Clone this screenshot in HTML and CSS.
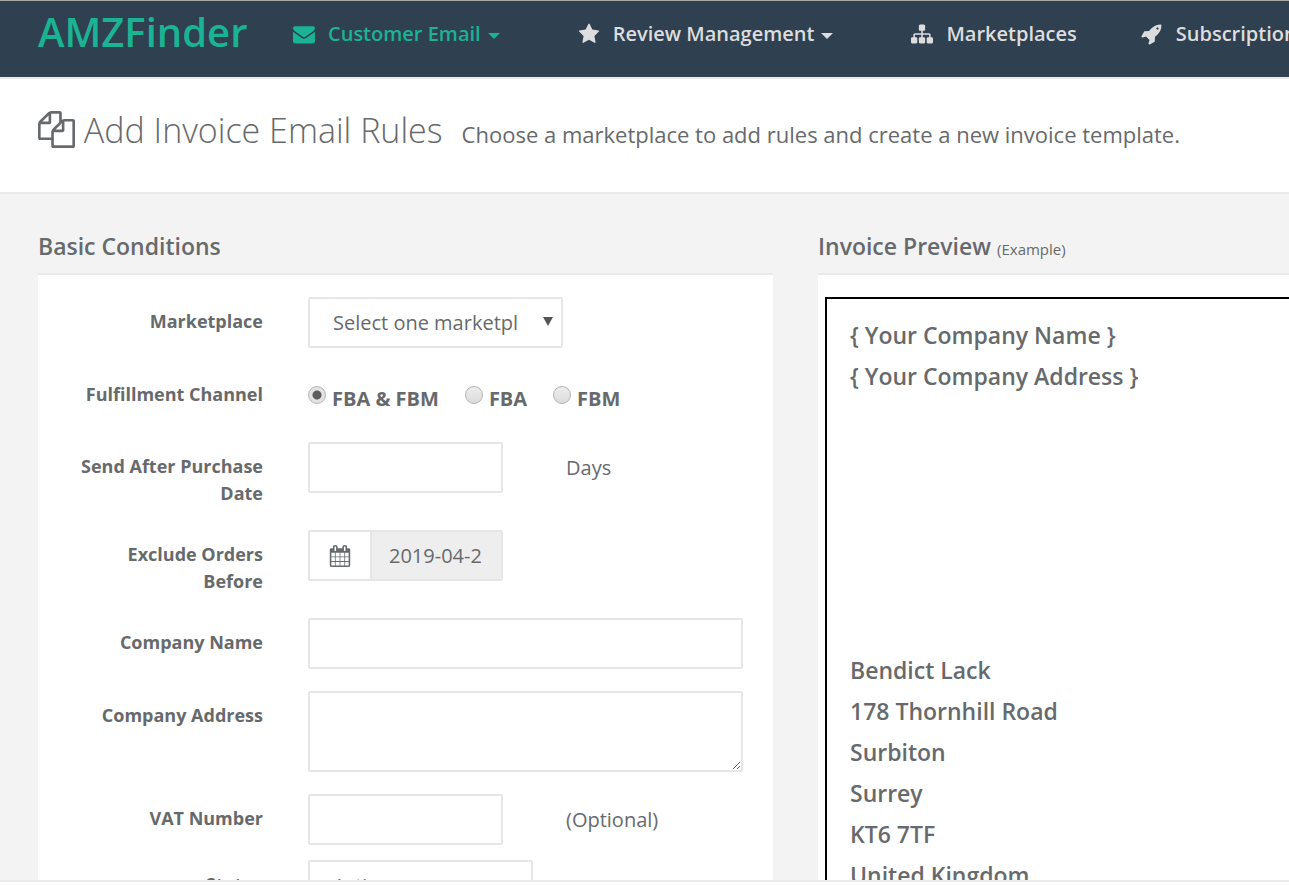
FILE: index.html
```html
<!DOCTYPE html>
<html lang="en">
<head>
    <meta charset="UTF-8">
    <meta name="viewport" content="width=device-width, initial-scale=1.0">
    <title>AMZFinder - Add Invoice Email Rules</title>
    <link rel="stylesheet" href="styles.css">
</head>
<body>

<nav class="navbar">
    <a class="brand" href="#">AMZFinder</a>
    <ul class="nav-menu">
        <li class="active">
            <a href="#">
                <svg class="nav-icon" viewBox="0 0 1792 1792"><path d="M1792 710v794q0 66-47 113t-113 47h-1472q-66 0-113-47t-47-113v-794q44 49 101 87 362 246 497 345 57 42 92.500 65.500t94.500 48 110 24.500h2q51 0 110-24.500t94.500-48 92.500-65.500q170-123 498-345 57-39 100-87zm0-294q0 79-49 151t-122 123q-376 261-468 325-10 7-42.500 30.500t-54 38-52 32.500-57.500 27-50 9h-2q-23 0-50-9t-57.500-27-52-32.500-54-38-42.500-30.500q-91-64-262-182.500t-205-142.500q-62-42-117-115.500t-55-136.500q0-78 41.500-130t118.500-52h1472q65 0 112.500 47t47.500 113z"/></svg>
                <span>Customer Email</span>
                <b class="caret"></b>
            </a>
        </li>
        <li>
            <a href="#">
                <svg class="nav-icon" viewBox="0 0 1792 1792"><path d="M1728 647q0 22-26 48l-363 354 86 500q1 7 1 20 0 21-10.500 35.500t-30.500 14.500q-19 0-40-12l-449-236-449 236q-22 12-40 12-21 0-31.500-14.500t-10.500-35.500q0-6 2-20l86-500-364-354q-25-27-25-48 0-37 56-46l502-73 225-455q19-41 49-41t49 41l225 455 502 73q56 9 56 46z"/></svg>
                <span>Review Management</span>
                <b class="caret"></b>
            </a>
        </li>
        <li>
            <a href="#">
                <svg class="nav-icon" viewBox="0 0 1792 1792"><path d="M1792 1248v320q0 40-28 68t-68 28h-320q-40 0-68-28t-28-68v-320q0-40 28-68t68-28h96v-192h-512v192h96q40 0 68 28t28 68v320q0 40-28 68t-68 28h-320q-40 0-68-28t-28-68v-320q0-40 28-68t68-28h96v-192h-512v192h96q40 0 68 28t28 68v320q0 40-28 68t-68 28h-320q-40 0-68-28t-28-68v-320q0-40 28-68t68-28h96v-192q0-52 38-90t90-38h512v-192h-96q-40 0-68-28t-28-68v-320q0-40 28-68t68-28h320q40 0 68 28t28 68v320q0 40-28 68t-68 28h-96v192h512q52 0 90 38t38 90v192h96q40 0 68 28t28 68z"/></svg>
                <span>Marketplaces</span>
            </a>
        </li>
        <li>
            <a href="#">
                <svg class="nav-icon" viewBox="0 0 1792 1792"><path d="M1440 448q0-40-28-68t-68-28-68 28-28 68 28 68 68 28 68-28 28-68zm224-288q0 249-75.500 430.500t-253.500 360.500q-81 80-195 176l-20 379q-2 16-16 26l-384 224q-7 4-16 4-12 0-23-9l-64-64q-13-14-8-32l85-276-281-281-276 85q-3 1-9 1-14 0-23-9l-64-64q-17-19-5-39l224-384q10-14 26-16l379-20q96-114 176-195 188-187 358-258t431-71q14 0 24 9.500t10 22.500z"/></svg>
                <span>Subscription</span>
            </a>
        </li>
    </ul>
</nav>

<header class="page-heading">
    <h2>
        <svg class="heading-icon" viewBox="0 0 1792 1792"><path d="M1696 384q40 0 68 28t28 68v1216q0 40-28 68t-68 28h-960q-40 0-68-28t-28-68v-288h-544q-40 0-68-28t-28-68v-672q0-40 20-88t48-76l408-408q28-28 76-48t88-20h416q40 0 68 28t28 68v328q68-40 128-40h416zm-544 213l-299 299h299v-299zm-640-384l-299 299h299v-299zm196 647l316-316v-416h-384v416q0 40-28 68t-68 28h-416v640h512v-256q0-40 20-88t48-76zm956 804v-1152h-384v416q0 40-28 68t-68 28h-416v640h896z"/></svg>
        Add Invoice Email Rules
    </h2>
    <p>Choose a marketplace to add rules and create a new invoice template.</p>
</header>

<main class="content">
    <section class="panel panel-form">
        <h5>Basic Conditions</h5>
        <form class="panel-body">
            <div class="form-row">
                <label class="row-label" for="marketplace">Marketplace</label>
                <div class="select-wrap">
                    <select id="marketplace" class="form-control">
                        <option>Select one marketplace</option>
                    </select>
                </div>
            </div>

            <div class="form-row row-radio" role="radiogroup" aria-labelledby="channel">
                <span class="row-label" id="channel">Fulfillment Channel</span>
                <div class="radios">
                    <label><input type="radio" name="channel" checked>FBA &amp; FBM</label>
                    <label><input type="radio" name="channel">FBA</label>
                    <label><input type="radio" name="channel">FBM</label>
                </div>
            </div>

            <div class="form-row row-tall">
                <label class="row-label" for="days">Send After Purchase Date</label>
                <input id="days" class="form-control short" type="text">
                <span class="hint">Days</span>
            </div>

            <div class="form-row row-tall">
                <label class="row-label" for="before">Exclude Orders Before</label>
                <div class="date-group short">
                    <span class="addon">
                        <svg viewBox="0 0 1792 1792"><path d="M192 1664h288v-288h-288v288zm352 0h320v-288h-320v288zm-352-352h288v-320h-288v320zm352 0h320v-320h-320v320zm-352-384h288v-288h-288v288zm736 736h320v-288h-320v288zm-384-736h320v-288h-320v288zm768 736h288v-288h-288v288zm-384-352h320v-320h-320v320zm-352-864v-288q0-13-9.500-22.500t-22.500-9.500h-64q-13 0-22.500 9.500t-9.500 22.500v288q0 13 9.500 22.500t22.500 9.500h64q13 0 22.500-9.500t9.500-22.500zm736 864h288v-320h-288v320zm-384-384h320v-288h-320v288zm384 0h288v-288h-288v288zm32-480v-288q0-13-9.500-22.500t-22.500-9.500h-64q-13 0-22.500 9.500t-9.500 22.500v288q0 13 9.500 22.500t22.500 9.500h64q13 0 22.500-9.500t9.500-22.500zm384-64v1280q0 52-38 90t-90 38h-1408q-52 0-90-38t-38-90v-1280q0-52 38-90t90-38h128v-96q0-66 47-113t113-47h64q66 0 113 47t47 113v96h384v-96q0-66 47-113t113-47h64q66 0 113 47t47 113v96h128q52 0 90 38t38 90z"/></svg>
                    </span>
                    <input id="before" class="form-control" type="text" value="2019-04-25" readonly>
                </div>
            </div>

            <div class="form-row">
                <label class="row-label" for="company">Company Name</label>
                <input id="company" class="form-control full" type="text">
            </div>

            <div class="form-row">
                <label class="row-label" for="address">Company Address</label>
                <textarea id="address" class="form-control full"></textarea>
            </div>

            <div class="form-row row-tight">
                <label class="row-label" for="vat">VAT Number</label>
                <input id="vat" class="form-control short" type="text">
                <span class="hint">(Optional)</span>
            </div>

            <div class="form-row">
                <label class="row-label" for="status">Status</label>
                <select id="status" class="form-control status">
                    <option>Active</option>
                </select>
            </div>
        </form>
    </section>

    <section class="panel panel-preview">
        <h5>Invoice Preview <small>(Example)</small></h5>
        <div class="panel-body">
            <div class="invoice">
                <div class="company">
                    <p>{ Your Company Name }</p>
                    <p>{ Your Company Address }</p>
                </div>
                <address>
                    <p>Bendict Lack</p>
                    <p>178 Thornhill Road</p>
                    <p>Surbiton</p>
                    <p>Surrey</p>
                    <p>KT6 7TF</p>
                    <p>United Kingdom</p>
                </address>
            </div>
        </div>
    </section>
</main>

<footer class="footer"></footer>

</body>
</html>
```

FILE: styles.css
```css
* {
    box-sizing: border-box;
}

body {
    margin: 0;
    height: 100vh;
    display: flex;
    flex-direction: column;
    overflow: hidden;
    background-color: #f3f3f4;
    color: #676a6c;
    font-family: "Open Sans", "Noto Sans", sans-serif;
    font-size: 20px;
}

h2, h5, p, ul {
    margin: 0;
    padding: 0;
}

svg {
    fill: currentColor;
}

/* top bar */
.navbar {
    flex: none;
    display: flex;
    height: 79px;
    padding-left: 38px;
    background-color: #2f4050;
    border-top: 1px solid #a7a7a7;
    border-bottom: 2px solid #e7eaec;
    overflow: hidden;
}

.navbar a {
    text-decoration: none;
    color: inherit;
}

.navbar .brand {
    width: 255px;
    flex: none;
    color: #1ab394;
    font-size: 40px;
    font-weight: 600;
    line-height: 62px;
}

.nav-menu {
    display: flex;
    gap: 64px;
    list-style: none;
    color: #dddddd;
    font-weight: 600;
    white-space: nowrap;
}

.nav-menu a {
    display: flex;
    align-items: center;
    height: 65px;
}

.nav-menu .active {
    color: #1ab394;
}

.nav-icon {
    width: 22px;
    height: 22px;
    margin-right: 13px;
}

.caret {
    margin: 5px 14px 0 7px;
    border-top: 6px solid;
    border-left: 6px solid transparent;
    border-right: 6px solid transparent;
}

/* page title */
.page-heading {
    flex: none;
    display: flex;
    align-items: baseline;
    gap: 19px;
    height: 115px;
    padding: 23px 38px 0;
    background-color: #fff;
    border-bottom: 2px solid #e7eaec;
    white-space: nowrap;
}

.page-heading h2 {
    font-size: 34px;
    font-weight: 300;
    line-height: 56px;
}

.page-heading p {
    font-size: 22px;
}

.heading-icon {
    width: 37px;
    height: 37px;
    vertical-align: -5px;
}

/* panels */
.content {
    flex: 1;
    min-height: 0;
    display: flex;
    gap: 45px;
    padding: 32px 0 0 38px;
    overflow: hidden;
}

.panel {
    display: flex;
    flex-direction: column;
}

.panel-form {
    flex: 0 0 60%;
    max-width: 735px;
}

.panel-preview {
    flex: 1;
}

.panel h5 {
    flex: none;
    height: 47px;
    font-size: 23px;
    font-weight: 600;
    line-height: 40px;
}

.panel h5 small {
    font-size: 15px;
    font-weight: 400;
}

.panel-body {
    flex: 1 0 auto;
    border-top: 2px solid #e7eaec;
    background-color: #fff;
}

/* form */
form.panel-body {
    padding: 22px 30px 0;
}

.form-row {
    display: flex;
    align-items: flex-start;
    margin-bottom: 22px;
}

.row-label {
    flex: none;
    width: 195px;
    margin-right: 45px;
    padding-top: 11px;
    text-align: right;
    font-size: 18px;
    font-weight: 700;
    line-height: 27px;
}

.row-radio {
    min-height: 50px;
}

.row-tall {
    min-height: 66px;
}

.row-tight {
    margin-bottom: 15px;
}

.form-control {
    height: 51px;
    padding: 0 23px;
    border: 2px solid #e5e6e7;
    border-radius: 2px;
    outline: none;
    background-color: #fff;
    color: inherit;
    font: inherit;
}

.short {
    width: 195px;
}

.full {
    flex: 1;
    min-width: 0;
}

textarea.form-control {
    height: 81px;
}

select.form-control {
    appearance: none;
}

.select-wrap {
    position: relative;
    width: 255px;
}

.select-wrap select {
    width: 100%;
    padding-right: 43px;
}

.select-wrap::after {
    content: "";
    position: absolute;
    top: 20px;
    right: 10px;
    border-top: 9px solid #555;
    border-left: 5px solid transparent;
    border-right: 5px solid transparent;
    pointer-events: none;
}

.status {
    width: 225px;
}

.radios {
    display: flex;
    gap: 26px;
    padding-top: 15px;
    font-weight: 700;
    line-height: 27px;
}

.radios label {
    display: flex;
}

.radios input {
    appearance: none;
    width: 18px;
    height: 18px;
    margin: 1px 6px 0 0;
    border: 1px solid #b4b4b4;
    border-radius: 50%;
    background: linear-gradient(#ededed, #dcdcdc);
}

.radios input:checked {
    background: radial-gradient(circle, #5c5c5c 4px, #e2e2e2 5px);
}

.hint {
    margin-left: 63px;
    line-height: 51px;
}

.date-group {
    display: flex;
}

.addon {
    flex: none;
    display: flex;
    align-items: center;
    justify-content: center;
    width: 62px;
    border: 2px solid #e5e6e7;
    border-right: 0;
    border-radius: 2px 0 0 2px;
}

.addon svg {
    width: 22px;
    height: 22px;
}

.date-group .form-control {
    width: 133px;
    padding: 0 20px 0 17px;
    background-color: #eee;
    border-radius: 0 2px 2px 0;
}

/* invoice preview */
.panel-preview .panel-body {
    display: flex;
    padding: 22px 0 0 7px;
}

.invoice {
    flex: 1;
    padding: 16px 23px;
    border: 2px solid #000;
    border-right: 0;
    font-size: 23px;
    font-weight: 600;
    line-height: 41px;
}

.company {
    min-height: 335px;
}

.invoice address {
    font-style: normal;
}

.footer {
    flex: none;
    height: 5px;
    border-top: 2px solid #e7eaec;
    background-color: #fff;
}
```
